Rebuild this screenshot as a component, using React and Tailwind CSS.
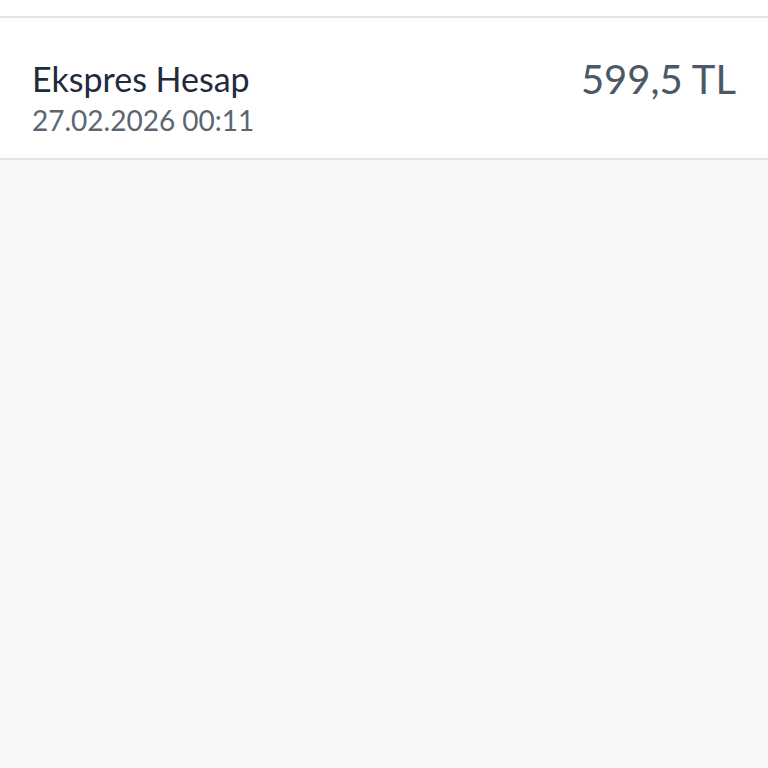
export default function App() {
  return (
    <div className="min-h-screen bg-[#f7f8fa]" style={{ fontFamily: "Lato, 'Noto Sans', sans-serif" }}>
      <div className="h-[18px] bg-white border-b-2 border-[#e3e5e9]" />
      <div className="flex items-start justify-between bg-white border-b-2 border-[#e3e5e9] px-8 pt-[41px] pb-[17px]">
        <div className="flex flex-col">
          <span className="text-[34px] leading-[40px] text-[#222a3b]">Ekspres Hesap</span>
          <span className="text-[28px] leading-[42px] text-[#5b6670]">27.02.2026 00:11</span>
        </div>
        <span className="text-[40px] leading-[40px] text-[#4b5966]">599,5 TL</span>
      </div>
    </div>
  );
}
